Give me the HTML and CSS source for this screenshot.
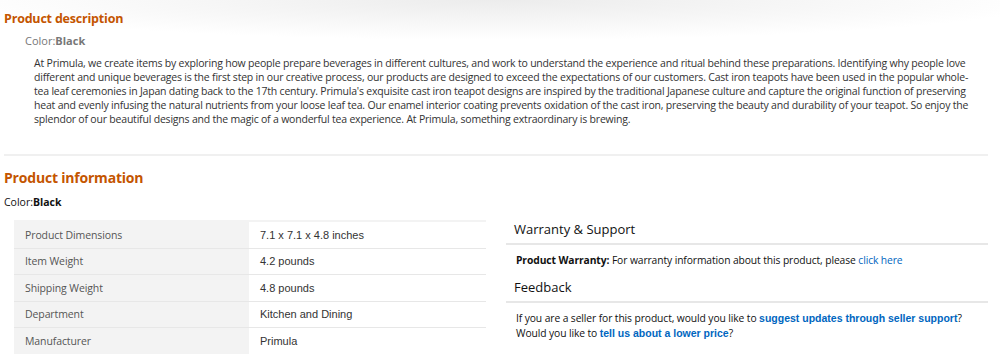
FILE: index.html
```html
<!DOCTYPE html>
<html lang="en">
<head>
<meta charset="utf-8">
<title>Product details</title>
<link rel="stylesheet" href="styles.css">
</head>
<body>
<div class="topshade"></div>

<div class="desc">
  <h2 class="section-title">Product description</h2>
  <div class="desc-color">Color:<b>Black</b></div>
  <p class="desc-text">At Primula, we create items by exploring how people prepare beverages in different cultures, and work to understand the experience and ritual behind these preparations. Identifying why people love different and unique beverages is the first step in our creative process, our products are designed to exceed the expectations of our customers. Cast iron teapots have been used in the popular whole-tea leaf ceremonies in Japan dating back to the 17th century. Primula's exquisite cast iron teapot designs are inspired by the traditional Japanese culture and capture the original function of preserving heat and evenly infusing the natural nutrients from your loose leaf tea. Our enamel interior coating prevents oxidation of the cast iron, preserving the beauty and durability of your teapot. So enjoy the splendor of our beautiful designs and the magic of a wonderful tea experience. At Primula, something extraordinary is brewing.</p>
</div>

<hr class="divider">

<div class="info">
  <h2 class="section-title big">Product information</h2>
  <div class="info-color">Color:<b>Black</b></div>

  <div class="info-cols">
    <table class="specs">
      <tr><th>Product Dimensions</th><td>7.1 x 7.1 x 4.8 inches</td></tr>
      <tr><th>Item Weight</th><td>4.2 pounds</td></tr>
      <tr><th>Shipping Weight</th><td>4.8 pounds</td></tr>
      <tr><th>Department</th><td>Kitchen and Dining</td></tr>
      <tr><th>Manufacturer</th><td>Primula</td></tr>
    </table>

    <div class="side">
      <h3 class="side-title">Warranty &amp; Support</h3>
      <div class="side-text"><b>Product Warranty:</b> For warranty information about this product, please <a href="#">click here</a></div>
      <h3 class="side-title">Feedback</h3>
      <div class="side-text">If you are a seller for this product, would you like to <a href="#" class="strong">suggest updates through seller support</a>?<br>
      Would you like to <a href="#" class="strong">tell us about a lower price</a>?</div>
    </div>
  </div>
</div>
</body>
</html>
```

FILE: styles.css
```css
body {
    margin: 0;
    font-family: "Open Sans", "Noto Sans", sans-serif;
    color: #111;
    background: #fff;
    position: relative;
}

.topshade {
    position: absolute;
    left: 0;
    top: 0;
    width: 100%;
    height: 40px;
    background: radial-gradient(ellipse 55% 100% at 50% 0, #ececec, rgba(255,255,255,0));
    pointer-events: none;
}

.section-title {
    margin: 0;
    color: #c45500;
    font-size: 12.5px;
    font-weight: bold;
    line-height: 18px;
    letter-spacing: -0.2px;
}
.section-title.big {
    font-size: 14px;
    line-height: 20px;
}

.desc {
    position: relative;
    padding: 10px 0 0 4px;
}
.desc-color {
    margin: 5px 0 0 21px;
    font-size: 11px;
    line-height: 16px;
    color: #777;
}
.desc-text {
    margin: 7px 0 0 30px;
    width: 948px;
    font-size: 10.5px;
    line-height: 14px;
    letter-spacing: -0.2px;
    color: #333;
}

.divider {
    margin: 28px 12px 0 4px;
    border: 0;
    height: 2px;
    background: #f0f0f0;
}

.info {
    padding: 12px 0 0 4px;
}
.info-color {
    margin-top: 7px;
    font-size: 10.5px;
    line-height: 14px;
    color: #111;
}

.info-cols {
    display: flex;
    gap: 20px;
    margin-top: 11px;
    padding-left: 10px;
}

.specs {
    width: 472px;
    border-collapse: collapse;
    border-top: 2px solid #f3f3f3;
    font-size: 11px;
}
.specs th, .specs td {
    height: 25.5px;
    padding: 0 11px;
    text-align: left;
    border-bottom: 1px solid #e7e7e7;
}
.specs th {
    width: 213px;
    background: #f3f3f3;
    font-weight: normal;
    font-size: 10.5px;
    letter-spacing: -0.1px;
    color: #555;
}
.specs td {
    font-family: "Liberation Sans", Arial, sans-serif;
    color: #333;
}

.side {
    width: 482px;
}
.side-title {
    margin: 0;
    padding: 0 0 5px 8px;
    font-size: 13px;
    font-weight: normal;
    line-height: 18px;
    color: #111;
    border-bottom: 2px solid #e7e7e7;
}
.side-text {
    padding: 8px 0 10px 10px;
    font-size: 10.3px;
    line-height: 15px;
    letter-spacing: -0.1px;
    color: #111;
}
.side-text a {
    color: #0066c0;
    text-decoration: none;
}
.side-text a.strong {
    font-family: "Liberation Sans", Arial, sans-serif;
    font-weight: bold;
    font-size: 10.5px;
    letter-spacing: 0;
}
```
